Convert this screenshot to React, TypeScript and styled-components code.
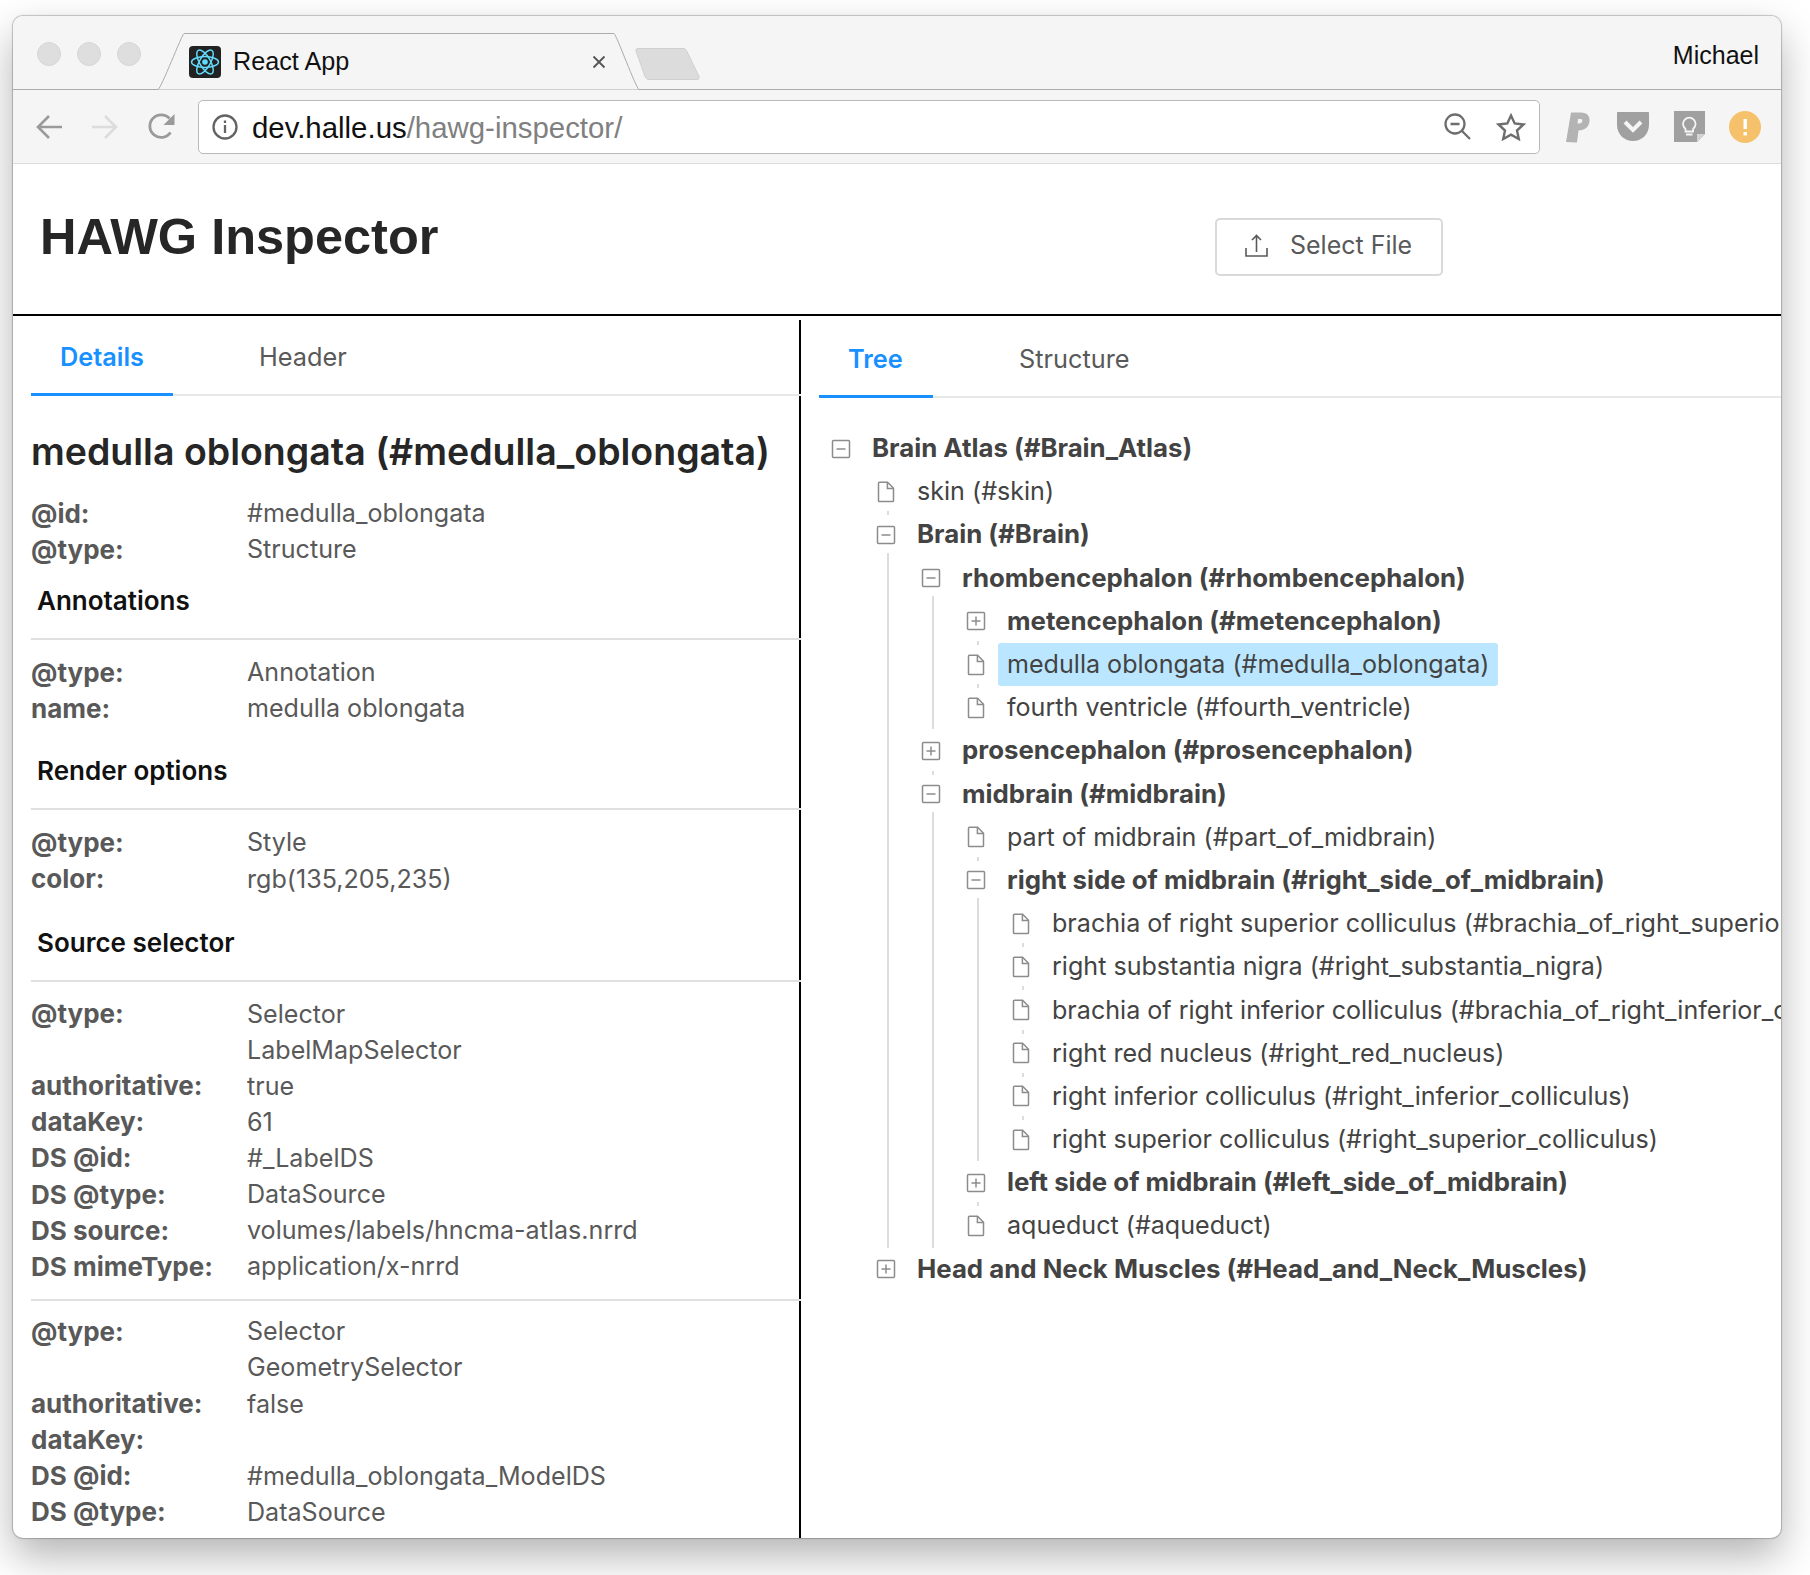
import React from "react";
import styled, { createGlobalStyle } from "styled-components";

const GlobalStyle = createGlobalStyle`
  html, body {
    margin: 0;
    padding: 0;
    background: #fff;
  }
  body {
    height: 1575px;
    overflow: hidden;
    font-family: Inter, "Liberation Sans", sans-serif;
  }
  * {
    box-sizing: border-box;
  }
`;

const BrowserWindow = styled.div`
  margin: 16px 0 0 13px;
  width: 1768px;
  height: 1522px;
  display: flex;
  flex-direction: column;
  overflow: hidden;
  background: #fff;
  border-radius: 10px;
  box-shadow: 0 0 1px 1px rgba(0, 0, 0, 0.22), 0 18px 42px rgba(0, 0, 0, 0.3);
`;

const TabStrip = styled.div`
  height: 74px;
  flex: none;
  display: flex;
  align-items: flex-end;
  padding: 0 22px 0 24px;
  background: #f5f5f5;
  border-bottom: 1px solid #ababab;
`;

const Lights = styled.div`
  display: flex;
  gap: 16px;
  align-self: flex-start;
  margin: 26px 16px 0 0;
`;

const Light = styled.span`
  width: 24px;
  height: 24px;
  border-radius: 50%;
  background: #dedede;
  border: 1px solid #d6d6d6;
`;

const BrowserTab = styled.div`
  position: relative;
  width: 483px;
  height: 57px;
  margin-bottom: -1px;
  display: flex;
  align-items: center;
  padding: 0 0 0 32px;
  font: 25.2px "Liberation Sans", Arial, sans-serif;
  color: #111;
`;

const TabOutline = styled.svg`
  position: absolute;
  inset: 0;
`;

const Favicon = styled.svg`
  position: relative;
  flex: none;
  margin: 0 12px 0 0;
`;

const TabTitle = styled.span`
  position: relative;
  flex: 1;
`;

const TabClose = styled.svg`
  position: relative;
  margin-right: 34px;
`;

const NewTab = styled.svg`
  flex: none;
  margin: 0 0 9px -5px;
`;

const UserName = styled.div`
  margin-left: auto;
  align-self: flex-start;
  margin-top: 25px;
  font: 25px "Liberation Sans", Arial, sans-serif;
  color: #111;
`;

const Toolbar = styled.div`
  height: 74px;
  flex: none;
  display: flex;
  align-items: center;
  padding: 0 20px 0 23px;
  background: #f5f5f5;
  border-bottom: 1px solid #dcdcdc;
`;

const NavIcon = styled.svg<{ $after: number }>`
  flex: none;
  margin-right: ${(p) => p.$after}px;
`;

const UrlBox = styled.div`
  width: 1342px;
  height: 54px;
  display: flex;
  align-items: center;
  padding: 0 13px;
  background: #fff;
  border: 1px solid #b9b9b9;
  border-radius: 5px;
  margin-right: 25px;
`;

const UrlText = styled.div`
  flex: 1;
  margin: 3px 0 0 14px;
  font: 29.4px "Liberation Sans", Arial, sans-serif;
  color: #111;
`;

const UrlPath = styled.span`
  color: #808080;
`;

const ExtIcon = styled.svg<{ $before?: number }>`
  flex: none;
  margin-left: ${(p) => p.$before || 0}px;
`;

const AppHeader = styled.header`
  height: 152px;
  flex: none;
  display: grid;
  grid-template-columns: 1175px auto;
  align-items: center;
  padding: 0 0 0 27px;
  border-bottom: 2px solid #000;
`;

const AppTitle = styled.h1`
  margin: -6px 0 0;
  font: bold 50.5px "Liberation Sans", Arial, sans-serif;
  color: #262626;
`;

const UploadButton = styled.button`
  width: 228px;
  height: 58px;
  margin-top: 15px;
  display: flex;
  align-items: center;
  padding: 0 0 3px 28px;
  gap: 22px;
  background: #fff;
  border: 2px solid #d9d9d9;
  border-radius: 5px;
  font: 25px Inter, sans-serif;
  color: #595959;
`;

const Columns = styled.div`
  flex: 1;
  min-height: 0;
  display: flex;
`;

const LeftPanel = styled.section`
  width: 788px;
  flex: none;
  margin-top: 4px;
  padding-left: 18px;
  border-right: 2px solid #000;
`;

const RightPanel = styled.section`
  flex: 1;
  min-width: 0;
  padding: 0 0 0 18px;
  overflow: hidden;
`;

const TabsBar = styled.div<{ $height: number; $overhang?: boolean }>`
  height: ${(p) => p.$height}px;
  display: flex;
  align-items: flex-end;
  border-bottom: 2px solid #e8e8e8;
  margin-right: ${(p) => (p.$overhang ? -2 : 0)}px;
  position: relative;
`;

const PanelTab = styled.div<{ $active?: boolean; $width: number }>`
  width: ${(p) => p.$width}px;
  height: 72px;
  margin-bottom: -2px;
  margin-right: 56px;
  padding: 15px 0 0 ${(p) => (p.$active ? 29 : 30)}px;
  font-size: 25.3px;
  line-height: 36px;
  font-weight: ${(p) => (p.$active ? 600 : 400)};
  color: ${(p) => (p.$active ? "#1890ff" : "#595959")};
  border-bottom: ${(p) => (p.$active ? "3px solid #1890ff" : "none")};
  white-space: nowrap;
`;

const ItemHeading = styled.h2`
  margin: 34px 0 21px;
  font-size: 37.5px;
  line-height: 44px;
  font-weight: 600;
  color: #262626;
  white-space: nowrap;
`;

const Properties = styled.div`
  display: grid;
  grid-template-columns: 216px 1fr;
  grid-auto-rows: 36.1px;
  align-items: center;
  font-size: 25.1px;
  color: #595959;
  white-space: nowrap;
`;

const PropLabel = styled.div`
  font-size: 26px;
  font-weight: 700;
`;

const SectionTitle = styled.h3<{ $gap: number }>`
  margin: ${(p) => p.$gap}px 0 0;
  padding: 0 0 0 6px;
  font-size: 26px;
  line-height: 36px;
  font-weight: 600;
  color: #111;
`;

const Divider = styled.div<{ $tight?: boolean }>`
  height: 2px;
  margin: ${(p) => (p.$tight ? "15px -2px 12px 0" : "19px -2px 14px 0")};
  background: #e0e0e0;
  position: relative;
`;

const Tree = styled.div`
  padding: 29px 0 0 12px;
  font-size: 25.1px;
  color: #434343;
  white-space: nowrap;
`;

const TreeList = styled.ul<{ $nested?: boolean; $line?: boolean }>`
  position: relative;
  list-style: none;
  margin: 0;
  padding: ${(p) => (p.$nested ? "0 0 0 45px" : 0)};
  ${(p) =>
    p.$line &&
    `&::before {
      content: "";
      position: absolute;
      left: 11px;
      top: -4px;
      bottom: 0;
      width: 2px;
      background: #dcdcdc;
    }`}
`;

const TreeRow = styled.div<{ $tick?: boolean }>`
  position: relative;
  height: 43.2px;
  display: flex;
  align-items: center;
  ${(p) =>
    p.$tick &&
    `&::after {
      content: "";
      position: absolute;
      left: 11px;
      bottom: -2px;
      width: 2px;
      height: 4px;
      background: #dcdcdc;
    }`}
`;

const TreeIcon = styled.svg`
  flex: none;
  width: 20px;
  margin-right: 12px;
`;

const TreeLabel = styled.span<{ $bold?: boolean; $selected?: boolean }>`
  display: block;
  height: 43px;
  line-height: 42px;
  padding: 0 9px;
  border-radius: 3px;
  font-size: ${(p) => (p.$bold ? "25.8px" : "inherit")};
  font-weight: ${(p) => (p.$bold ? 700 : 400)};
  background: ${(p) => (p.$selected ? "#bae7ff" : "transparent")};
`;

const BoxIcon = ({ open }: { open: boolean }) => (
  <TreeIcon viewBox="0 0 20 20" height="20" fill="none" stroke="#8c8c8c" strokeWidth="1.5">
    <rect x="1.5" y="1.5" width="17" height="17" rx="1" />
    <path d="M5.5 10h9" />
    {!open && <path d="M10 5.5v9" />}
  </TreeIcon>
);

const FileIcon = () => (
  <TreeIcon viewBox="0 0 20 22" height="22" fill="none" stroke="#8c8c8c" strokeWidth="1.5">
    <path d="M2.5 2.2c0-.5.3-.9.9-.9h8.2l5.9 6v12.4c0 .6-.4.9-.9.9H3.4c-.6 0-.9-.3-.9-.9z" />
    <path d="M11.4 1.5v6h6" />
  </TreeIcon>
);

interface Node {
  label: string;
  selected?: boolean;
  collapsed?: boolean;
  children?: Node[];
}

const TREE: Node[] = [
  {
    label: "Brain Atlas (#Brain_Atlas)",
    children: [
      { label: "skin (#skin)" },
      {
        label: "Brain (#Brain)",
        children: [
          {
            label: "rhombencephalon (#rhombencephalon)",
            children: [
              { label: "metencephalon (#metencephalon)", collapsed: true },
              { label: "medulla oblongata (#medulla_oblongata)", selected: true },
              { label: "fourth ventricle (#fourth_ventricle)" },
            ],
          },
          { label: "prosencephalon (#prosencephalon)", collapsed: true },
          {
            label: "midbrain (#midbrain)",
            children: [
              { label: "part of midbrain (#part_of_midbrain)" },
              {
                label: "right side of midbrain (#right_side_of_midbrain)",
                children: [
                  { label: "brachia of right superior colliculus (#brachia_of_right_superior_colliculus)" },
                  { label: "right substantia nigra (#right_substantia_nigra)" },
                  { label: "brachia of right inferior colliculus (#brachia_of_right_inferior_colliculus)" },
                  { label: "right red nucleus (#right_red_nucleus)" },
                  { label: "right inferior colliculus (#right_inferior_colliculus)" },
                  { label: "right superior colliculus (#right_superior_colliculus)" },
                ],
              },
              { label: "left side of midbrain (#left_side_of_midbrain)", collapsed: true },
              { label: "aqueduct (#aqueduct)" },
            ],
          },
        ],
      },
      { label: "Head and Neck Muscles (#Head_and_Neck_Muscles)", collapsed: true },
    ],
  },
];

const TreeNodes = ({ nodes, depth }: { nodes: Node[]; depth: number }) => (
  <TreeList $nested={depth > 0} $line={depth > 1}>
    {nodes.map((node, i) => {
      const parent = !!node.children || !!node.collapsed;
      const hasNext = i < nodes.length - 1;
      return (
        <li key={node.label}>
          <TreeRow $tick={hasNext && !node.children}>
            {parent ? <BoxIcon open={!node.collapsed} /> : <FileIcon />}
            <TreeLabel $bold={parent} $selected={node.selected}>
              {node.label}
            </TreeLabel>
          </TreeRow>
          {node.children && <TreeNodes nodes={node.children} depth={depth + 1} />}
        </li>
      );
    })}
  </TreeList>
);

const SECTIONS: { title?: string; gap?: number; rows: [string, string][] }[] = [
  {
    title: "Annotations",
    gap: 16,
    rows: [
      ["@type:", "Annotation"],
      ["name:", "medulla oblongata"],
    ],
  },
  {
    title: "Render options",
    gap: 27,
    rows: [
      ["@type:", "Style"],
      ["color:", "rgb(135,205,235)"],
    ],
  },
  {
    title: "Source selector",
    gap: 28,
    rows: [
      ["@type:", "Selector"],
      ["", "LabelMapSelector"],
      ["authoritative:", "true"],
      ["dataKey:", "61"],
      ["DS @id:", "#_LabelDS"],
      ["DS @type:", "DataSource"],
      ["DS source:", "volumes/labels/hncma-atlas.nrrd"],
      ["DS mimeType:", "application/x-nrrd"],
    ],
  },
  {
    rows: [
      ["@type:", "Selector"],
      ["", "GeometrySelector"],
      ["authoritative:", "false"],
      ["dataKey:", ""],
      ["DS @id:", "#medulla_oblongata_ModelDS"],
      ["DS @type:", "DataSource"],
      ["DS source:", "models/medulla_oblongata/surface.vtk"],
    ],
  },
];

const PropertyRows = ({ rows }: { rows: [string, string][] }) => (
  <Properties>
    {rows.map(([k, v], i) => (
      <React.Fragment key={i}>
        <PropLabel>{k}</PropLabel>
        <div>{v}</div>
      </React.Fragment>
    ))}
  </Properties>
);

export default function App() {
  return (
    <>
      <GlobalStyle />
      <BrowserWindow>
        <TabStrip>
          <Lights>
            <Light />
            <Light />
            <Light />
          </Lights>
          <BrowserTab>
            <TabOutline width="483" height="57" fill="none">
              <path d="M0 56.5h1C4 56 25 1 27 .5h430c2 0 22 55 25 56h1" fill="#f5f5f5" stroke="#ababab" />
            </TabOutline>
            <Favicon width="32" height="32" viewBox="0 0 32 32">
              <rect width="32" height="32" rx="4" fill="#222" />
              <g fill="none" stroke="#61dafb" strokeWidth="1.5">
                <ellipse cx="16" cy="16" rx="13.5" ry="5.4" />
                <ellipse cx="16" cy="16" rx="13.5" ry="5.4" transform="rotate(60 16 16)" />
                <ellipse cx="16" cy="16" rx="13.5" ry="5.4" transform="rotate(120 16 16)" />
              </g>
              <circle cx="16" cy="16" r="2.8" fill="#61dafb" />
            </Favicon>
            <TabTitle>React App</TabTitle>
            <TabClose width="14" height="14" viewBox="0 0 14 14" stroke="#555" strokeWidth="1.8">
              <path d="M1.5 1.5l11 11M12.5 1.5l-11 11" />
            </TabClose>
          </BrowserTab>
          <NewTab width="65" height="32" viewBox="0 0 65 32">
            <path d="M3 .5h45c2 0 3 1 4 3l12 25c.6 2-.4 3-2 3H14c-2 0-3-1-4-3L1 3C.5 1.5 1.5.5 3 .5z" fill="#dcdcdc" stroke="#cfcfcf" />
          </NewTab>
          <UserName>Michael</UserName>
        </TabStrip>
        <Toolbar>
          <NavIcon $after={30} width="26" height="26" viewBox="0 0 26 26" fill="none" stroke="#9a9a9a" strokeWidth="2.6">
            <path d="M26 13H2M13 2L2 13l11 11" />
          </NavIcon>
          <NavIcon $after={30} width="26" height="26" viewBox="0 0 26 26" fill="none" stroke="#dcdcdc" strokeWidth="2.6">
            <path d="M0 13h24M13 2l11 11-11 11" />
          </NavIcon>
          <NavIcon $after={23} width="27" height="27" viewBox="0 0 27 27" fill="none" stroke="#9a9a9a" strokeWidth="2.8">
            <path d="M22.5 19.5A11.3 11.3 0 1 1 21.5 5.5" />
            <path d="M26.5 1v11H15.500z" fill="#9a9a9a" stroke="none" />
          </NavIcon>
          <UrlBox>
            <svg width="26" height="26" viewBox="0 0 26 26" fill="none" stroke="#636363" strokeWidth="2.3">
              <circle cx="13" cy="13" r="11.5" />
              <path d="M13 11v8M13 6.5V9" />
            </svg>
            <UrlText>
              dev.halle.us<UrlPath>/hawg-inspector/</UrlPath>
            </UrlText>
            <svg width="27" height="27" viewBox="0 0 27 27" fill="none" stroke="#6e6e6e" strokeWidth="2.3">
              <circle cx="11" cy="11" r="9.5" />
              <path d="M6.5 11h9M18 18l8 8" />
            </svg>
            <ExtIcon $before={25} width="30" height="28" viewBox="0 0 30 28" fill="none" stroke="#6e6e6e" strokeWidth="2.4">
              <path d="M15 2.5l3.7 8 8.8 1-6.5 6 1.8 8.5-7.8-4.4-7.8 4.4L9 17.5l-6.5-6 8.8-1z" />
            </ExtIcon>
          </UrlBox>
          <ExtIcon width="25" height="32" viewBox="0 0 25 32">
            <path d="M6 1.5h10c6 0 9 3.5 8.500 8.500-.5 6-5 9.500-11 9.500l-1.500 12L1 31z" fill="#b3b3b3" />
            <path d="M13 8h2.500c1.500 0 2 .8 1.800 2-.2 1.500-1.300 2.500-2.800 2.500H12.500z" fill="#f5f5f5" />
          </ExtIcon>
          <ExtIcon $before={27} width="32" height="29" viewBox="0 0 32 29">
            <path d="M1 0h30c.6 0 1 .4 1 1v12c0 9-7 16-16 16S0 22 0 13V1c0-.6.4-1 1-1z" fill="#a0a0a0" />
            <path d="M8 10l8 8 8-8" fill="none" stroke="#f5f5f5" strokeWidth="4" />
          </ExtIcon>
          <ExtIcon $before={25} width="31" height="31" viewBox="0 0 31 31">
            <path d="M0 0h31v23l-8 8H0z" fill="#a0a0a0" />
            <path d="M23 31v-8h8z" fill="#d4d4d4" />
            <path d="M11.5 18c-1.500-1.500-2.500-3-2.500-5a6.300 6.300 0 0 1 12.600 0c0 2-1 3.500-2.500 5v2.500h-7.600zM12 23.500h6.500" fill="none" stroke="#f5f5f5" strokeWidth="1.8" />
          </ExtIcon>
          <ExtIcon $before={24} width="32" height="32" viewBox="0 0 32 32">
            <circle cx="16" cy="16" r="16" fill="#f5c26b" />
            <path d="M14.5 8h3.400v10h-3.400zM14.5 21h3.400v3.500h-3.400z" fill="#fff" />
          </ExtIcon>
        </Toolbar>
        <AppHeader>
          <AppTitle>HAWG Inspector</AppTitle>
          <UploadButton>
            <svg width="23" height="23" viewBox="0 0 23 23" fill="none" stroke="#595959" strokeWidth="1.6">
              <path d="M1 14v8h21v-8M11.5 18V1.500M7 6l4.500-4.500L16 6" />
            </svg>
            Select File
          </UploadButton>
        </AppHeader>
        <Columns>
          <LeftPanel>
            <TabsBar $height={76} $overhang>
              <PanelTab $active $width={142}>
                Details
              </PanelTab>
              <PanelTab $width={150}>Header</PanelTab>
            </TabsBar>
            <ItemHeading>medulla oblongata (#medulla_oblongata)</ItemHeading>
            <PropertyRows
              rows={[
                ["@id:", "#medulla_oblongata"],
                ["@type:", "Structure"],
              ]}
            />
            {SECTIONS.map((s, i) => (
              <React.Fragment key={i}>
                {s.title && <SectionTitle $gap={s.gap || 0}>{s.title}</SectionTitle>}
                <Divider $tight={!s.title} />
                <PropertyRows rows={s.rows} />
              </React.Fragment>
            ))}
          </LeftPanel>
          <RightPanel>
            <TabsBar $height={82}>
              <PanelTab $active $width={114}>
                Tree
              </PanelTab>
              <PanelTab $width={150}>Structure</PanelTab>
            </TabsBar>
            <Tree>
              <TreeNodes nodes={TREE} depth={0} />
            </Tree>
          </RightPanel>
        </Columns>
      </BrowserWindow>
    </>
  );
}
